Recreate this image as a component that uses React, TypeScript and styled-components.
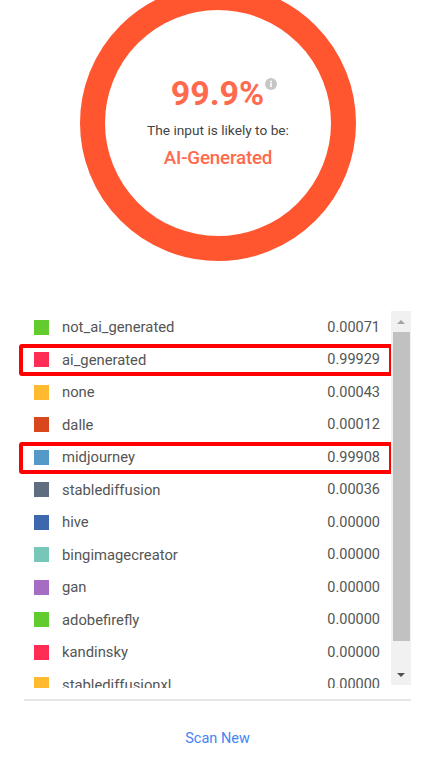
import styled, { createGlobalStyle } from "styled-components";

const GlobalStyle = createGlobalStyle`
  html, body {
    margin: 0;
    padding: 0;
    background: #ffffff;
  }
  body {
    font-family: Roboto, "Liberation Sans", Arial, sans-serif;
    overflow: hidden;
  }
`;

type Detection = {
  label: string;
  color: string;
  score: string;
  flagged?: boolean;
};

const DETECTIONS: Detection[] = [
  { label: "not_ai_generated", color: "#62cc2f", score: "0.00071" },
  { label: "ai_generated", color: "#ff2d55", score: "0.99929", flagged: true },
  { label: "none", color: "#ffba30", score: "0.00043" },
  { label: "dalle", color: "#d9481c", score: "0.00012" },
  { label: "midjourney", color: "#5599c8", score: "0.99908", flagged: true },
  { label: "stablediffusion", color: "#5e6e80", score: "0.00036" },
  { label: "hive", color: "#3d68ad", score: "0.00000" },
  { label: "bingimagecreator", color: "#76c7b7", score: "0.00000" },
  { label: "gan", color: "#a56cc1", score: "0.00000" },
  { label: "adobefirefly", color: "#62cc2f", score: "0.00000" },
  { label: "kandinsky", color: "#ff2d55", score: "0.00000" },
  { label: "stablediffusionxl", color: "#ffba30", score: "0.00000" },
];

const Page = styled.main`
  width: 435px;
  height: 783px;
  display: flex;
  flex-direction: column;
  align-items: stretch;
  padding: 0 24px;
  box-sizing: border-box;
`;

const Gauge = styled.section`
  display: flex;
  justify-content: center;
  margin-top: -15px;
  margin-left: 1px;
`;

const Ring = styled.div`
  width: 276px;
  height: 276px;
  box-sizing: border-box;
  border: 25px solid #ff5630;
  border-radius: 50%;
  display: flex;
  flex-direction: column;
  align-items: center;
  justify-content: center;
  padding-bottom: 4px;
`;

const Score = styled.div`
  display: flex;
  align-items: flex-start;
  color: #ff6a4d;
  font-size: 34px;
  font-weight: 700;
  line-height: 40px;
  margin-left: 12px;
`;

const InfoDot = styled.svg`
  width: 12px;
  height: 12px;
  margin-top: 5px;
  margin-left: 1px;
`;

const Caption = styled.div`
  color: #444444;
  font-size: 13.7px;
  line-height: 18px;
  margin-top: 8px;
`;

const Verdict = styled.div`
  color: #ff6a4d;
  font-size: 18.8px;
  font-weight: 500;
  line-height: 22px;
  margin-top: 8px;
  letter-spacing: -0.2px;
`;

const Results = styled.section`
  display: flex;
  height: 377px;
  margin-top: 50px;
`;

const Rows = styled.ul`
  flex: 1;
  list-style: none;
  margin: 0 0 0 -5px;
  padding: 0 0 0 5px;
  overflow: hidden;
`;

const Row = styled.li<{ $flagged?: boolean }>`
  position: relative;
  display: flex;
  align-items: center;
  height: 32.5px;
  padding: 0 11px 0 10px;
  color: #555555;
  font-size: 14.8px;

  &::after {
    content: "";
    display: ${(p) => (p.$flagged ? "block" : "none")};
    position: absolute;
    inset: 0.5px -2px 0 -5px;
    border: 4px solid #ff0000;
    border-radius: 3px;
  }
`;

const Swatch = styled.span<{ $color: string }>`
  width: 15px;
  height: 15px;
  flex-shrink: 0;
  background: ${(p) => p.$color};
  margin-right: 13px;
`;

const Label = styled.span`
  flex: 1;
`;

const Value = styled.span`
  font-size: 14.5px;
  font-variant-numeric: tabular-nums;
`;

const Scrollbar = styled.div`
  width: 20px;
  display: flex;
  flex-direction: column;
  background: #f1f1f1;
  height: 374px;
`;

const ScrollButton = styled.div`
  height: 21px;
  display: flex;
  align-items: center;
  justify-content: center;
`;

const Arrow = styled.span<{ $down?: boolean }>`
  width: 0;
  height: 0;
  border-left: 4px solid transparent;
  border-right: 4px solid transparent;
  ${(p) =>
    p.$down
      ? "border-top: 4px solid #505050;"
      : "border-bottom: 4px solid #a3a3a3;"}
`;

const Thumb = styled.div`
  height: 309px;
  margin: 0 1px 0 2px;
  background: #c1c1c1;
`;

const Track = styled.div`
  flex: 1;
`;

const Footer = styled.footer`
  margin-top: 11px;
  border-top: 2px solid #e6e6e6;
  display: flex;
  justify-content: center;
  padding-top: 29px;
`;

const ScanButton = styled.button`
  border: none;
  background: none;
  padding: 0;
  color: #4285f4;
  font-family: inherit;
  font-size: 14.5px;
  cursor: pointer;
`;

function InfoIcon() {
  return (
    <InfoDot viewBox="0 0 12 12">
      <circle cx="6" cy="6" r="6" fill="#c6c6c6" />
      <circle cx="6" cy="3.4" r="1" fill="#ffffff" />
      <rect x="5.2" y="5" width="1.6" height="4.2" fill="#ffffff" />
    </InfoDot>
  );
}

export default function App() {
  return (
    <>
      <GlobalStyle />
      <Page>
        <Gauge>
          <Ring>
            <Score>
              99.9%
              <InfoIcon />
            </Score>
            <Caption>The input is likely to be:</Caption>
            <Verdict>AI-Generated</Verdict>
          </Ring>
        </Gauge>

        <Results>
          <Rows>
            {DETECTIONS.map((d) => (
              <Row key={d.label} $flagged={d.flagged}>
                <Swatch $color={d.color} />
                <Label>{d.label}</Label>
                <Value>{d.score}</Value>
              </Row>
            ))}
          </Rows>
          <Scrollbar>
            <ScrollButton>
              <Arrow />
            </ScrollButton>
            <Thumb />
            <Track />
            <ScrollButton>
              <Arrow $down />
            </ScrollButton>
          </Scrollbar>
        </Results>

        <Footer>
          <ScanButton>Scan New</ScanButton>
        </Footer>
      </Page>
    </>
  );
}
